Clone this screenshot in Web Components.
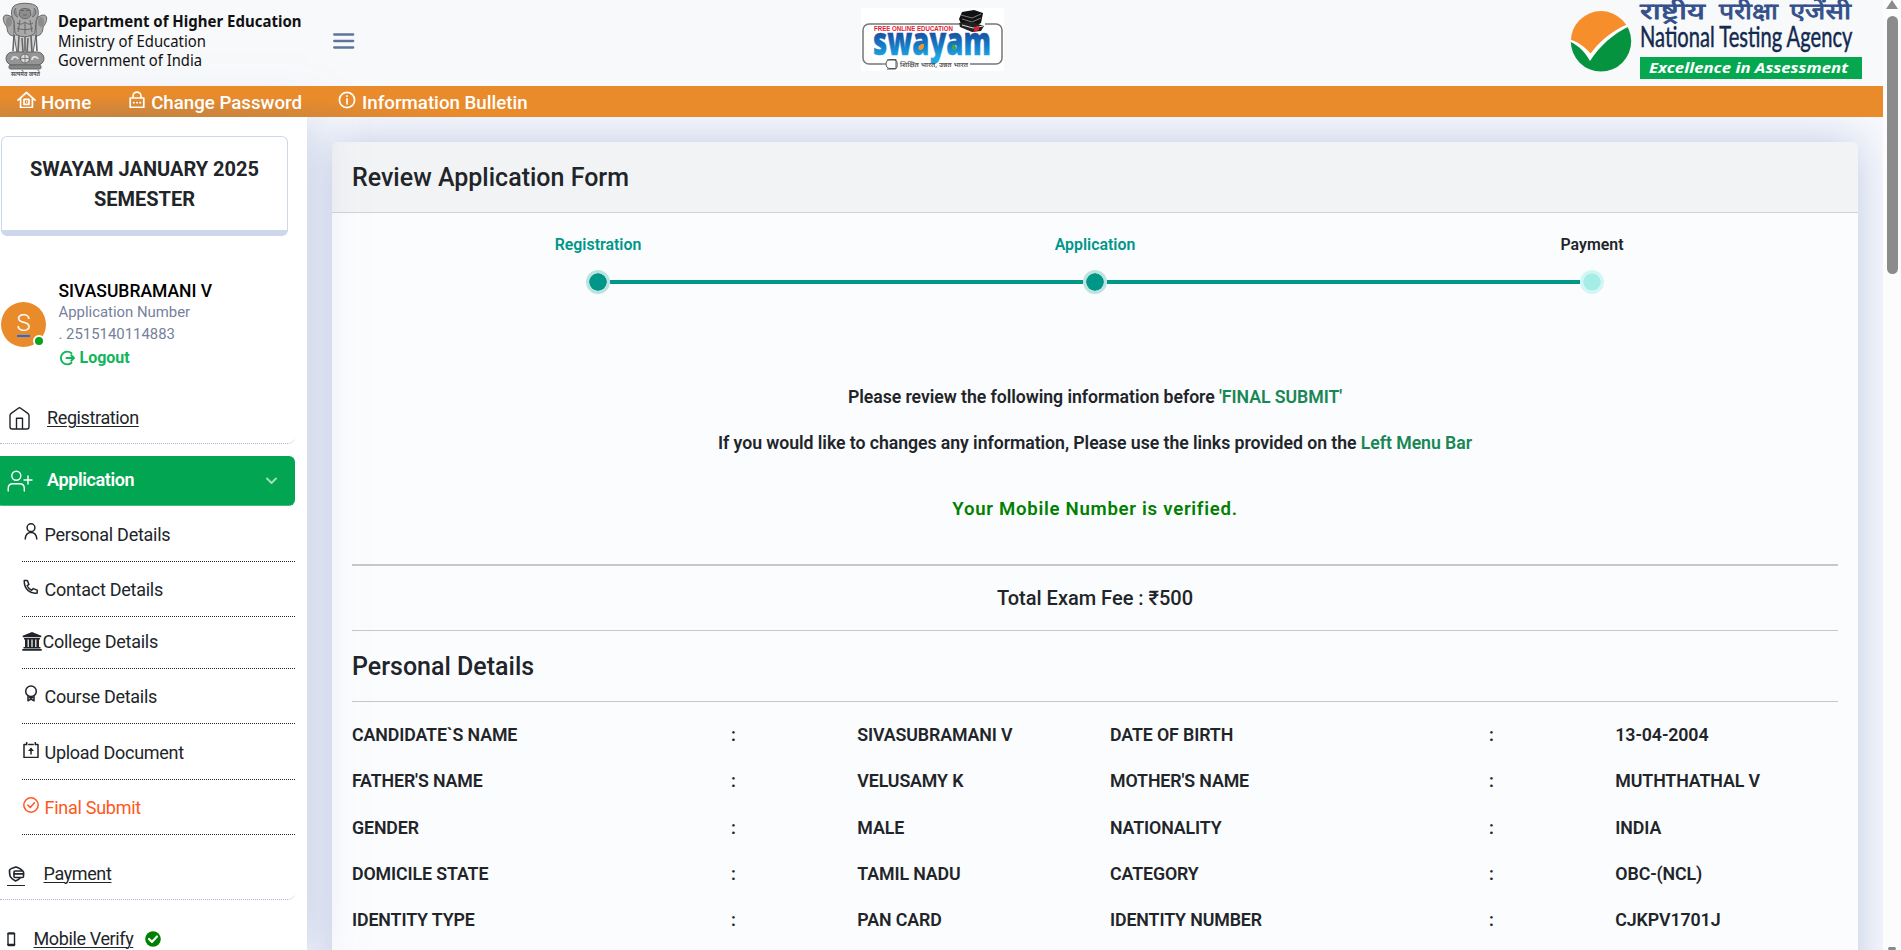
<!DOCTYPE html>
<html lang="en">
<head>
<meta charset="utf-8">
<title>Review Application Form</title>
<style>
html,body{margin:0;height:950px;overflow:hidden;background:#f8f9fd}
body{font-family:Roboto,"Liberation Sans",sans-serif;color:#212529}
</style>
</head>
<body>
<nta-app></nta-app>
<script>
const define=(name,html)=>customElements.define(name,class extends HTMLElement{
  constructor(){super();this.attachShadow({mode:'open'}).innerHTML=html(this);}
});
const ICONS={
  house:'<path d="M1 9.2 9.5 1.5 18 9.2M3.6 7.5v9h11.8v-9M7 8.400h5v5H7z"/><path d="M9 10.3h1.3v1.3H9z" stroke="none" fill="currentColor"/>',
  lock:'<path d="M4 6.8V5.2C4 3 5.6 1.2 8 1.2s4 1.8 4 4v1.6M1.2 7h13.6v9.4H1.2z"/><path d="M4.600 11.700h.4M7.800 11.700h.4M11 11.700h.4"/>',
  info:'<circle cx="9" cy="9" r="7.6"/><path d="M9 7.8v5M9 4.8v.4"/>',
  home2:'<path d="M1 8.6C1 7.6 1.4 7 2.2 6.4L9.3 1.2a2 2 0 0 1 2.4 0l7.1 5.2c.8.6 1.2 1.2 1.2 2.2v11.2c0 1.4-.8 2.2-2.2 2.2H3.2C1.8 22 1 21.2 1 19.800zM7.500 22V11.200h6V22"/>',
  adduser:'<circle cx="9.300" cy="5.800" r="4.500"/><path d="M1.200 21v-2.500c0-3 2-4.700 4.800-4.700h6.500c2.800 0 4.800 1.700 4.800 4.700V21M21 6v8M17 10h8"/>',
  user:'<circle cx="8" cy="4.700" r="3.900"/><path d="M2.200 16c.3-4 2.600-6.600 5.800-6.600s5.500 2.600 5.800 6.600"/>',
  phone:'<path d="M1.200 1.400h3.200l1.500 4-1.800 1.400c.9 2 2.400 3.500 4.600 4.500l1.600-1.700 3.900 1.500v3C8 15.400 1 10.500 1.200 1.400z"/>',
  award:'<circle cx="8" cy="6.200" r="5.300"/><path d="M5 10.800v5l3-1.700 3 1.700v-5M6.500 12.800h3"/>',
  upload:'<path d="M3 2.500H1v13h14v-13h-2M5.800 2.500h4.400M3.700.5v2.200M12.300.5v2.200M8 12V7"/><path d="m5 9 3-3.400L11 9z" fill="currentColor" stroke="none"/>',
  check:'<circle cx="8" cy="8" r="7.200"/><path d="m4.800 8 2.400 2.400 4.200-4.600"/>',
  logout:'<path d="M12.500 3.200A6.400 6.400 0 1 0 12.500 12.800M7.500 8h7M12.200 5.300 15 8l-2.800 2.700"/>',
  bank:'<g fill="currentColor" stroke="none"><path d="M10 0 19.300 3.800V5.200H.7V3.800zM2 6h16v1.500H2zM3 7.500h2.600v7.500H3zM6.800 7.500h2.600v7.500H6.800zM10.600 7.500h2.600v7.500h-2.600zM14.400 7.500H17v7.500h-2.600zM1.500 15h17v1.400h-17zM.3 17h19.400v1.700H.3z"/></g>',
  pay:'<path d="M14 4.500C13.500 3 12.500 2.700 8 1 3 2.800 1.500 3 1.500 4.500c0 5 0 7.500 6 10.500 2-.8 3.500-1.700 4.500-3" stroke-width="1.700"/><rect x="6" y="5" width="9.500" height="6.500" rx="1" stroke-width="1.600"/><path d="M6 7.800h9.500" stroke-width="1.800"/>',
  mobile:'<rect x="1" y="1" width="6.500" height="12.500" rx=".8"/><path d="M1 1.800h6.500M1 12.500h6.500" stroke-width="1.600"/>',
  verified:'<circle cx="8" cy="8" r="7.800" fill="#008000" stroke="none"/><path d="m4 8 2.900 2.900L12 5.500" stroke="#fff" stroke-width="2.200"/>',
  chevron:'<path d="m1 1.500 4.500 4.500L10 1.500"/>',
  bars:'<path d="M1.200 1.500h19M1.200 8h19M1.200 14.500h19" stroke-width="2.300"/>'
};
define('x-icon',el=>{
  const [w,h]=el.getAttribute('size').split(' ');
  return `<style>:host{display:block;flex:none;line-height:0}svg{display:block}</style>
  <svg width="${w}" height="${h}" viewBox="0 0 ${el.getAttribute('box')||w+' '+h}" fill="none" stroke="currentColor" stroke-width="${el.getAttribute('weight')||1.5}" stroke-linecap="round" stroke-linejoin="round">${ICONS[el.getAttribute('name')]}</svg>`;
});

define('govt-brand',()=>`<style>:host{display:block;width:310px}svg{display:block}text{font-family:"Noto Sans","Open Sans",sans-serif}</style>
<svg width="310" height="86" viewBox="0 0 310 86">
<g stroke="#666" stroke-width="1" fill="#a9a9a9">
<path d="M12 17C2 11 1 20 7 27c0 6 3 9 7 9V21zM38 17c10-6 11 3 5 10 0 6-3 9-7 9V21z"/>
<path d="M14 35h22l-3 18H17z" fill="#d2d2d2"/>
<path d="M13 7c3-5 21-5 24 0 3 7 0 10-1 14l-1 12c-6 5-15 5-20 0l-1-12c-2-4-4-8-1-14z"/>
<path d="M16 8c-3 3-2 8 2 9M34 8c3 3 2 8-2 9M20 10c2-2 8-2 10 0l1 5c-3 5-9 5-12 0z" fill="#8d8d8d"/>
<path d="M21 10.500h3M26 10.500h3M23 15h4M17 23c3 2 6 1 8-1 2 2 5 3 8 1M17 28c3 2 13 2 16 0M20 20l-2 12M30 20l2 12M25 22v12" fill="none"/>
<path d="M14 35l-1 16M19 36l-1 16M25 37v14M31 36l1 16M36 35l1 16M22 38l1 14M28 38l-1 14" stroke-width="1.600" fill="none"/>
<ellipse cx="9" cy="22" rx="3" ry="5" fill="#8c8c8c" stroke="none"/><ellipse cx="41" cy="22" rx="3" ry="5" fill="#8c8c8c" stroke="none"/>
<rect x="6" y="52" width="38" height="13" rx="6.500" fill="#969696"/>
<circle cx="25" cy="58.500" r="4.500" fill="#dcdcdc"/><path d="M25 54.500v8M21 58.500h8" stroke-width=".8"/>
<path d="M12 60c0-4 5-4 6-1M32 60c0-4 5-4 6-1" fill="none" stroke="#e0e0e0" stroke-width="1.800"/>
<rect x="9" y="65" width="32" height="4" rx="1.500" fill="#858585"/></g>
<text x="11" y="76" font-size="6" font-weight="700" fill="#555" textLength="29" lengthAdjust="spacingAndGlyphs">सत्यमेव जयते</text>
<g fill="#111"><text x="58" y="27" font-size="16.500" font-weight="700" textLength="243.500" lengthAdjust="spacingAndGlyphs">Department of Higher Education</text>
<text x="58" y="46.800" font-size="16.500" textLength="148" lengthAdjust="spacingAndGlyphs">Ministry of Education</text>
<text x="58" y="65.500" font-size="16.500" textLength="144" lengthAdjust="spacingAndGlyphs">Government of India</text></g>
</svg>`);

define('swayam-logo',()=>`<style>:host{display:block}svg{display:block}</style>
<svg width="143" height="63" viewBox="0 0 143 63">
<defs><linearGradient id="b" x1="0" y1="0" x2="0" y2="1"><stop offset=".3" stop-color="#1c4496"/><stop offset=".6" stop-color="#1478c4"/><stop offset=".85" stop-color="#1fa9e4"/></linearGradient></defs>
<path d="M0 0h143v63H0z" fill="#fff"/>
<path d="M22 56H8a6 6 0 0 1-6-6V22a6 6 0 0 1 6-6h90M124 16h11a6 6 0 0 1 6 6v28a6 6 0 0 1-6 6h-26" fill="none" stroke="#777" stroke-width="1.500"/>
<text x="13" y="22.500" font-family="Liberation Sans" font-size="6.300" font-weight="700" fill="#e0202c" textLength="79" lengthAdjust="spacingAndGlyphs">FREE ONLINE EDUCATION</text>
<text x="12" y="46.500" font-family="Open Sans" font-size="38" font-weight="800" fill="url(#b)" stroke="url(#b)" stroke-width=".4" textLength="118" lengthAdjust="spacingAndGlyphs">swayam</text>
<path d="M60 36c-3 4-3 6 0 6 3-1 3-3 3-6z" fill="#f79321"/><path d="M92 36c-2 4 0 6 2 6 2-2 1-5-2-6z" fill="#3aa935"/>
<path d="m98 11 3-7 12-2 9 3-2 10-9 5-11-4z" fill="#111"/><path d="m100 7 11 3 9-4M101 11l10 3 9-4" stroke="#888" stroke-width=".9" fill="none"/>
<path d="m98 15 13-1 12 4-3 5-9 1-12-5z" fill="#222"/><path d="m101 17 11 3 10-2" stroke="#ddd" stroke-width="1" fill="none"/><path d="m113 19 5-1v4l-5 2z" fill="#e0202c"/>
<path d="M22 56h3c0-3 2-4.500 4-4.500h6v9h-6c-2 0-4-1.500-4-4.500M26 52h8c3 0 3 9 0 9h-8" fill="#fff" stroke="#555" stroke-width="1"/>
<text x="39" y="58.500" font-family="Noto Sans,Roboto" font-size="6.500" font-weight="600" fill="#555" textLength="68" lengthAdjust="spacingAndGlyphs">शिक्षित भारत, उन्नत भारत</text>
</svg>`);

define('nta-logo',()=>`<style>:host{display:block}svg{display:block}</style>
<svg width="292" height="82" viewBox="0 0 292 82">
<defs><clipPath id="c"><circle cx="31" cy="41.300" r="30.200"/></clipPath></defs>
<g clip-path="url(#c)"><path d="M0 0h70v90H0z" fill="#fff"/><path d="M0 0h60l-3 24.500C42 31 30 41 20.500 53.500 14 46 8 42 0 39.500z" fill="#f68e2b"/><path d="M0 41.500C9 46 15 52 20 61 30 46 42 34 62 25v55H0z" fill="#06933f"/></g>
<g font-family="Noto Sans,Roboto,sans-serif" font-size="22.500" fill="#34508b" stroke="#34508b" stroke-width=".8">
<text x="70" y="19" textLength="65" lengthAdjust="spacingAndGlyphs">राष्ट्रीय</text><text x="149" y="19" textLength="59" lengthAdjust="spacingAndGlyphs">परीक्षा</text><text x="220" y="19" textLength="61" lengthAdjust="spacingAndGlyphs">एजेंसी</text></g>
<text transform="translate(70 46.500) scale(.72 1)" font-family="Lato,sans-serif" font-size="29.500" fill="#13294f" stroke="#13294f" stroke-width=".5" textLength="295" lengthAdjust="spacingAndGlyphs">National Testing Agency</text>
<path d="M70 57h222v22H70z" fill="#06a84f"/>
<text x="79" y="73.300" font-family="Noto Sans,sans-serif" font-size="15" font-weight="700" font-style="italic" fill="#fff" textLength="199" lengthAdjust="spacingAndGlyphs">Excellence in Assessment</text>
</svg>`);

define('top-header',()=>`<style>:host{display:flex;height:86px;background:#f8f9fb;align-items:flex-start;width:1883px}
x-icon{margin:32.500px 0 0 22.500px;color:#60739c}swayam-logo{margin:8px 0 0 506.500px}nta-logo{margin-left:566px}</style>
<govt-brand></govt-brand><x-icon name="bars" size="22 16.500"></x-icon><swayam-logo></swayam-logo><nta-logo></nta-logo>`);

define('top-nav',()=>`<style>:host{display:flex;position:relative;z-index:2;height:31px;background:radial-gradient(ellipse 350px 26px at 130px 35px,rgba(120,115,110,.38),rgba(120,115,110,0)),#ea8b2b;color:#fff;font:500 18.700px/31px Roboto}
a{display:flex;align-items:flex-start}span{padding-top:1.500px;white-space:pre}x-icon{margin-top:4.500px}</style>
<a style="margin-left:17px"><x-icon name="house" size="19 17" weight="1.700"></x-icon><span style="margin-left:5px">Home</span></a>
<a style="margin-left:38px"><x-icon name="lock" size="16 17" weight="1.700"></x-icon><span style="margin-left:6px">Change Password</span></a>
<a style="margin-left:36px"><x-icon name="info" size="18 18" weight="1.700"></x-icon><span style="margin-left:6px">Information Bulletin</span></a>`);

define('user-card',()=>`<style>:host{display:flex;margin:44px 0 0 1px;height:90px;white-space:pre}
.av{position:relative;margin-top:22px;width:45px;height:45px;border-radius:50%;background:#ea8b2b;color:#fff;font:300 24px/42px Roboto;text-align:center;display:flex;flex-direction:column;align-items:center}
.av b{width:13px;height:2px;background:#1b6df0;margin-top:-9px}
i{position:absolute;left:32px;top:32.500px;width:8px;height:8px;border:2px solid #fff;border-radius:50%;background:#05a61b}
.t{margin-left:12.500px;font:400 14.900px/22px Roboto;color:#75819b}
.n{font:500 17.500px/21px Roboto;color:#000;position:relative;top:1px}
.l{display:flex;align-items:center;gap:5px;margin-top:1px;font:700 16px/24px Roboto;color:#12b55b}</style>
<div class="av">S<b></b><i></i></div><div class="t"><div class="n">SIVASUBRAMANI V</div><div>Application Number</div><div>. 2515140114883</div><div class="l"><x-icon name="logout" size="16 16" weight="1.900"></x-icon>Logout</div></div>`);

define('menu-item',el=>`<style>:host{display:flex;align-items:center;box-sizing:border-box;width:295px;height:51px;border-bottom:1px dotted #a9b6d0;border-radius:0 0 7px 0;font:400 18px/26px Roboto;letter-spacing:-.38px;white-space:pre}
span{text-decoration:underline;text-underline-offset:2px;text-decoration-thickness:1px;margin-top:-1px}
.ib{width:var(--tx);flex:none}
:host([active]){background:#02a652;color:#fff;border-radius:0 6px 6px 0;height:50px;border-bottom-color:#7fd2a8}
:host([active]) span{text-decoration:none;font-weight:600}</style>
<div class="ib"><slot name="icon"></slot></div><span><slot></slot></span><slot name="end"></slot>`);

define('sub-item',el=>`<style>:host{display:flex;align-items:flex-end;box-sizing:border-box;width:273px;height:55px;margin-left:22px;border-bottom:1px dotted #212529;padding-bottom:13px;font:400 18px/26px Roboto;letter-spacing:-.27px;white-space:pre}</style><slot name="icon"></slot><slot></slot>`);

define('side-bar',()=>`<style>:host{display:block;width:307px;height:833px;flex:none;background:#fff;box-shadow:0 0 44px rgba(150,168,210,.55);position:relative;z-index:1}
.sem{box-sizing:border-box;margin:19px 0 0 1px;width:287px;height:100px;border:1px solid #cdd7eb;border-bottom-width:6px;border-radius:6px;padding-top:17px;text-align:center;font:700 20px/30px Roboto}
.wrap{display:flow-root}sub-item x-icon{margin:0 5.500px 8px 1px}</style>
<div class="wrap"><div class="sem">SWAYAM JANUARY 2025<br>SEMESTER</div><user-card></user-card>
<menu-item style="--tx:47px;margin-top:23px"><x-icon slot="icon" style="margin-left:9px" name="home2" size="21 23" weight="1.400"></x-icon>Registration</menu-item>
<menu-item active style="--tx:47px;margin-top:12px"><x-icon slot="icon" style="margin-left:7px" name="adduser" size="26 22" weight="1.400"></x-icon>Application<x-icon slot="end" name="chevron" size="11 7" weight="2" style="margin-left:132px;color:#a3dcbf"></x-icon></menu-item>
<sub-item style="height:56px"><x-icon slot="icon" name="user" size="16 17" weight="1.500"></x-icon>Personal Details</sub-item>
<sub-item><x-icon slot="icon" name="phone" size="16 16" style="margin-bottom:8px" weight="1.500"></x-icon>Contact Details</sub-item>
<sub-item style="height:52px"><x-icon slot="icon" name="bank" size="20 19" style="margin:0 .5px 4px 0"></x-icon>College Details</sub-item>
<sub-item><x-icon slot="icon" name="award" size="16 17" weight="1.500"></x-icon>Course Details</sub-item>
<sub-item style="height:56px"><x-icon slot="icon" name="upload" size="16 16" weight="1.500" style="margin-bottom:8.500px"></x-icon>Upload Document</sub-item>
<sub-item style="color:#ff5722"><x-icon slot="icon" name="check" size="16 16" style="margin-bottom:8.500px"></x-icon>Final Submit</sub-item>
<menu-item style="--tx:43.500px;margin-top:14px"><x-icon slot="icon" style="margin-left:7px;border-bottom:1px solid #212529;width:18px;padding:3px 0 3px 1px;box-sizing:border-box" name="pay" size="17 16"></x-icon>Payment</menu-item>
<menu-item style="--tx:33.500px;margin-top:14px"><x-icon slot="icon" style="margin-left:7px" name="mobile" size="9 15" weight="1.400"></x-icon>Mobile Verify<x-icon slot="end" name="verified" size="16 16" style="margin-left:12px"></x-icon></menu-item></div>`);

define('step-item',el=>`<style>:host{display:flex;flex-direction:column;align-items:center;flex:1;position:relative;color:#009688;font:600 15.900px/24px Roboto}
b{box-sizing:border-box;width:24px;height:24px;margin-top:13px;border-radius:50%;background:#009688;border:3px solid #bce3df;background-clip:padding-box}
:host(:not([last]))::after{content:"";position:absolute;left:calc(50% + 12px);width:calc(100% - 24px);top:47px;height:4px;background:#009688}
:host([last]){color:#212529}:host([last]) b{background-color:#a5ede6;border-color:#d0f7f3}</style><slot></slot><b></b>`);

define('detail-row',el=>`<style>:host{display:grid;grid-template-columns:3fr 1fr 2fr 3fr 1fr 2fr;width:1516px;height:46.300px;font:600 17.800px/26px Roboto;letter-spacing:-.12px;white-space:pre}</style>`+
  el.getAttribute('v').split('|').map((s,i)=>`<div>${s}</div>`).join(''));

define('review-card',()=>`<style>:host{display:block;width:1526px;height:900px;background:#fbfcfe;border-radius:6px;box-shadow:0 0 44px rgba(150,168,210,.6);text-align:center}
header{padding:21px 20px 19px;border-bottom:1px solid #d0d2d5;border-radius:6px 6px 0 0;background:#f2f3f5;text-align:left}
h2{margin:0;font:500 25px/30px Roboto}
.steps{display:flex;width:1491px;margin:20px auto 0 17.500px}
p{margin:0 0 20px;font:600 17.700px/26px Roboto;letter-spacing:-.06px}em{font-style:normal;color:#198754}
.ok{margin:40px 0 41px;font:600 18.600px/27px Roboto;letter-spacing:.72px;color:#008000}
hr{margin:0 20px;border:0;height:1px;background:#c5c7c9}
.fee{margin:20px 0;font:500 20px/24px Roboto}
h2.title{margin:21px 20px 19px;text-align:left}
.rows{margin:20px 0 0 20px;text-align:left}</style>
<header><h2>Review Application Form</h2></header>
<div class="steps"><step-item>Registration</step-item><step-item>Application</step-item><step-item last>Payment</step-item></div>
<p style="margin-top:90px">Please review the following information before <em>'FINAL SUBMIT'</em></p>
<p>If you would like to changes any information, Please use the links provided on the <em>Left Menu Bar</em></p>
<p class="ok">Your Mobile Number is verified.</p>
<hr style="height:2px"><div class="fee">Total Exam Fee : ₹500</div><hr>
<h2 class="title">Personal Details</h2><hr>
<div class="rows">
<detail-row v="CANDIDATE\`S NAME|:|SIVASUBRAMANI V|DATE OF BIRTH|:|13-04-2004"></detail-row>
<detail-row v="FATHER'S NAME|:|VELUSAMY K|MOTHER'S NAME|:|MUTHTHATHAL V"></detail-row>
<detail-row v="GENDER|:|MALE|NATIONALITY|:|INDIA"></detail-row>
<detail-row v="DOMICILE STATE|:|TAMIL NADU|CATEGORY|:|OBC-(NCL)"></detail-row>
<detail-row v="IDENTITY TYPE|:|PAN CARD|IDENTITY NUMBER|:|CJKPV1701J"></detail-row></div>`);

define('scroll-track',()=>`<style>:host{display:flex;flex-direction:column;align-items:center;width:18px;height:950px;background:#fcfcfc;position:relative;z-index:3}
.u{width:0;border:6px solid transparent;border-top:0;border-bottom:9px solid #8b8b8b}
.th{width:11px;height:259px;margin-top:7px;border-radius:6px;background:#8b8b8b}
.d{margin-top:673px;width:8px;height:3px;background:#8b8b8b;border-radius:2px}</style><div class="u"></div><div class="th"></div><div class="d"></div>`);

define('nta-app',()=>`<style>:host{display:grid;grid-template-columns:1883px 18px;height:950px;overflow:hidden}
.page{overflow:hidden;height:950px}.cols{display:flex}.main{padding:25px 0 0 25px}</style>
<div class="page"><top-header></top-header><top-nav></top-nav><div class="cols"><side-bar></side-bar><div class="main"><review-card></review-card></div></div></div><scroll-track></scroll-track>`);
</script>
</body>
</html>
